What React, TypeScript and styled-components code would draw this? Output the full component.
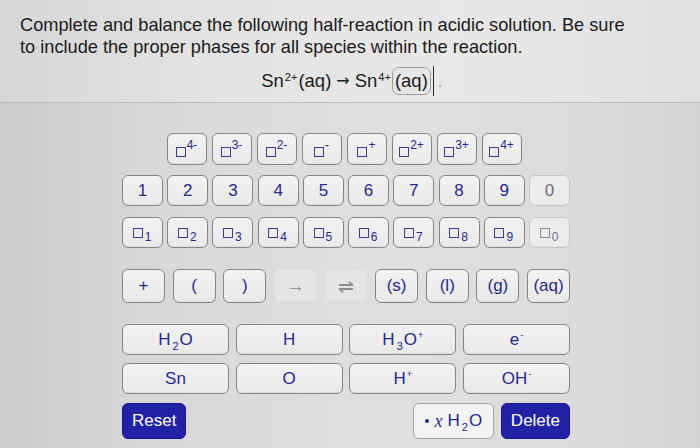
import React from 'react';
import styled, { createGlobalStyle, css } from 'styled-components';

const GlobalStyle = createGlobalStyle`
  html, body {
    margin: 0;
    padding: 0;
  }
  body {
    font-family: "Liberation Sans", Arial, sans-serif;
  }
`;

const Page = styled.div`
  width: 700px;
  height: 448px;
  overflow: hidden;
  background: linear-gradient(90deg, #cbcbcb 0%, #d8d8d8 22%, #dfdfdf 55%, #dbdbdb 85%, #d4d4d4 100%);
`;

const Question = styled.section`
  box-sizing: border-box;
  height: 103px;
  padding: 14px 20px 0;
  border-bottom: 1px solid #bdbdbd;
  background: linear-gradient(90deg, #d6d6d6 0%, #e3e3e3 30%, #e8e8e8 65%, #e1e1e1 100%);
  color: #1b1b1b;
`;

const Prompt = styled.p`
  margin: 0;
  font-size: 18.2px;
  line-height: 22px;
`;

const Equation = styled.div`
  display: flex;
  justify-content: center;
  align-items: center;
  height: 28px;
  margin-top: 9px;
  padding-left: 2px;
  font-size: 18.5px;
  line-height: 28px;
  color: #1b1b1b;
`;

const Arrow = styled.span`
  margin: 0 5px;
  font-family: "DejaVu Sans", sans-serif;
  font-size: 16px;
`;

const EqSup = styled.span`
  font-size: 11px;
  position: relative;
  top: -4px;
  margin: 0 1px;
`;

const Slot = styled.span`
  display: inline-flex;
  align-items: center;
  height: 26px;
  padding: 0 2px;
  border: 1px solid #9c9c9c;
  border-radius: 7px;
`;

const Caret = styled.span`
  width: 1px;
  height: 30px;
  margin-left: 2px;
  background: #2a2a2a;
`;

const Dot = styled.span`
  width: 2px;
  height: 2px;
  margin: 10px 0 0 5px;
  background: #a0a0a0;
  border-radius: 50%;
`;

const Keypad = styled.div`
  width: 448px;
  margin: 30px 0 0 122px;
  display: flex;
  flex-direction: column;
`;

const Row = styled.div<{ $h: number; $mt?: number; $center?: boolean }>`
  display: flex;
  justify-content: ${(p) => (p.$center ? 'center' : 'space-between')};
  gap: ${(p) => (p.$center ? '5px' : '0')};
  height: ${(p) => p.$h}px;
  margin-top: ${(p) => p.$mt ?? 0}px;
  padding-right: ${(p) => (p.$center ? '4px' : '0')};
`;

const Key = styled.button<{ $w: number; $muted?: boolean; $flat?: boolean }>`
  box-sizing: border-box;
  width: ${(p) => p.$w}px;
  height: 100%;
  padding: 0;
  display: flex;
  align-items: center;
  justify-content: center;
  font-family: "Liberation Sans", Arial, sans-serif;
  font-size: 17px;
  color: #28288c;
  background: linear-gradient(#f2f2f2, #e9e9e9);
  border: 1px solid #858585;
  border-radius: 6px;
  box-shadow: inset 0 -1px 0 rgba(0, 0, 0, 0.04);
  ${(p) =>
    p.$muted &&
    css`
      color: #6f6f7a;
      border-color: #c6c6c6;
      background: #ececec;
    `}
  ${(p) =>
    p.$flat &&
    css`
      color: #8c8c8c;
      border-color: #dedede;
      background: #e5e5e5;
      font-size: 19px;
    `}
`;

const Box = styled.span<{ $drop?: number; $muted?: boolean }>`
  display: inline-block;
  box-sizing: border-box;
  width: 10px;
  height: 10px;
  border: 1.5px solid ${(p) => (p.$muted ? '#8a8a94' : '#3b3b9c')};
  position: relative;
  top: ${(p) => p.$drop ?? 0}px;
`;

const Sup = styled.span<{ $size?: number; $lift?: number }>`
  font-size: ${(p) => p.$size ?? 11}px;
  position: relative;
  top: -${(p) => p.$lift ?? 5}px;
  margin-left: 1px;
`;

const Sub = styled.span<{ $size?: number; $drop?: number }>`
  font-size: ${(p) => p.$size ?? 11}px;
  position: relative;
  top: ${(p) => p.$drop ?? 6}px;
  margin: 0 1px 0 2px;
`;

const Action = styled.button`
  box-sizing: border-box;
  height: 100%;
  padding: 0 9px;
  font-family: "Liberation Sans", Arial, sans-serif;
  font-size: 17px;
  color: #ffffff;
  background: #2222a6;
  border: 1px solid #17178a;
  border-radius: 6px;
`;

const Tools = styled.div`
  display: flex;
  gap: 7px;
  height: 100%;
`;

const Water = styled.button`
  box-sizing: border-box;
  width: 81px;
  height: 100%;
  padding: 0;
  display: flex;
  align-items: center;
  justify-content: center;
  font-family: "Liberation Sans", Arial, sans-serif;
  font-size: 17px;
  color: #28288c;
  background: #f3f3f3;
  border: 1px solid #a3a3a3;
  border-radius: 6px;
`;

const Bullet = styled.span`
  width: 4px;
  height: 4px;
  border-radius: 50%;
  background: #28288c;
  margin-right: 6px;
`;

const Var = styled.span`
  font-family: "Liberation Serif", "Times New Roman", serif;
  font-style: italic;
  font-size: 18px;
  margin-right: 5px;
`;

const charges = ['4-', '3-', '2-', '-', '+', '2+', '3+', '4+'];
const digits = ['1', '2', '3', '4', '5', '6', '7', '8', '9', '0'];

const App = () => {
  return (
    <>
      <GlobalStyle />
      <Page>
        <Question>
          <Prompt>
            Complete and balance the following half-reaction in acidic solution. Be sure
            <br />
            to include the proper phases for all species within the reaction.
          </Prompt>
          <Equation>
            Sn<EqSup>2+</EqSup>(aq)
            <Arrow>→</Arrow>
            Sn<EqSup>4+</EqSup>
            <Slot>(aq)</Slot>
            <Caret />
            <Dot />
          </Equation>
        </Question>

        <Keypad>
          <Row $h={32} $center>
            {charges.map((c) => (
              <Key key={c} $w={40}>
                <Box $drop={3} />
                <Sup $size={12} $lift={4}>
                  {c}
                </Sup>
              </Key>
            ))}
          </Row>

          <Row $h={31} $mt={10}>
            {digits.map((d) => (
              <Key key={d} $w={41} $muted={d === '0'}>
                {d}
              </Key>
            ))}
          </Row>

          <Row $h={31} $mt={11}>
            {digits.map((d) => (
              <Key key={d} $w={41} $muted={d === '0'}>
                <Box $muted={d === '0'} />
                <Sub $size={12} $drop={4}>
                  {d}
                </Sub>
              </Key>
            ))}
          </Row>

          <Row $h={34} $mt={21}>
            <Key $w={43}>+</Key>
            <Key $w={43}>(</Key>
            <Key $w={43}>)</Key>
            <Key $w={43} $flat>
              →
            </Key>
            <Key $w={43} $flat>
              ⇌
            </Key>
            <Key $w={43}>(s)</Key>
            <Key $w={43}>(l)</Key>
            <Key $w={43}>(g)</Key>
            <Key $w={43}>(aq)</Key>
          </Row>

          <Row $h={31} $mt={21}>
            <Key $w={107}>
              H<Sub>2</Sub>O
            </Key>
            <Key $w={107}>H</Key>
            <Key $w={107}>
              H<Sub>3</Sub>O<Sup $size={9} $lift={5}>+</Sup>
            </Key>
            <Key $w={107}>
              e<Sup $size={9} $lift={5}>-</Sup>
            </Key>
          </Row>

          <Row $h={31} $mt={8}>
            <Key $w={107}>Sn</Key>
            <Key $w={107}>O</Key>
            <Key $w={107}>
              H<Sup $size={9} $lift={5}>+</Sup>
            </Key>
            <Key $w={107}>
              OH<Sup $size={9} $lift={5}>-</Sup>
            </Key>
          </Row>

          <Row $h={36} $mt={9}>
            <Action>Reset</Action>
            <Tools>
              <Water>
                <Bullet />
                <Var>x</Var>H<Sub>2</Sub>O
              </Water>
              <Action>Delete</Action>
            </Tools>
          </Row>
        </Keypad>
      </Page>
    </>
  );
};

export default App;
